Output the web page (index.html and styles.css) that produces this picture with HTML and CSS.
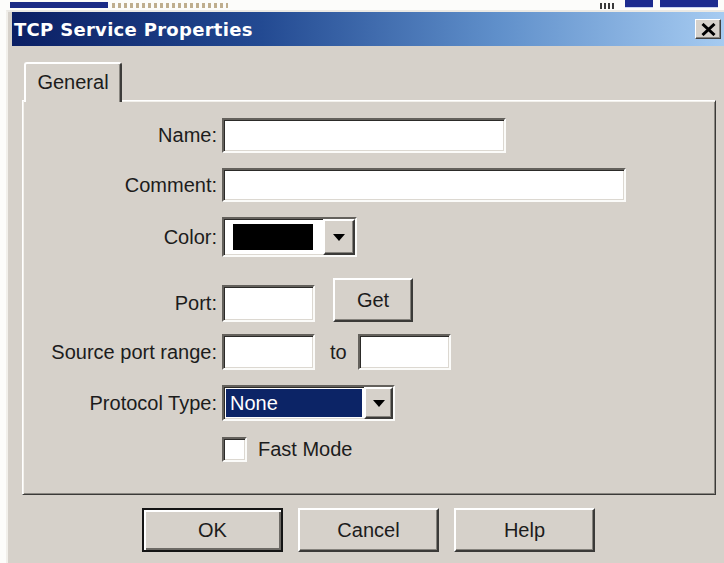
FILE: index.html
```html
<!DOCTYPE html>
<html lang="en">
<head>
<meta charset="utf-8">
<title>TCP Service Properties</title>
<link rel="stylesheet" href="styles.css">
</head>
<body>
  <div class="backdrop">
    <span class="frag-bar"></span>
    <span class="frag-dots"></span>
    <span class="frag-ink"></span>
    <span class="frag-tile"></span>
    <span class="frag-tile wide"></span>
  </div>

  <div class="window">
    <div class="titlebar">
      <span class="title">TCP Service Properties</span>
      <span class="close">
        <svg width="15" height="13" viewBox="0 0 15 13"><path d="M1.5 1 L13.5 12 M13.5 1 L1.5 12" stroke="#000" stroke-width="3"/></svg>
      </span>
    </div>

    <div class="client">
      <div class="tabstrip">
        <div class="tab">General</div>
      </div>

      <div class="panel">
        <div class="row">
          <label class="lbl">Name:</label>
          <div class="edit w-name"></div>
        </div>

        <div class="row">
          <label class="lbl">Comment:</label>
          <div class="edit w-comment"></div>
        </div>

        <div class="row">
          <label class="lbl">Color:</label>
          <div class="combo combo-color">
            <span class="swatch"></span>
            <span class="dd tall">
              <svg width="12" height="7" viewBox="0 0 12 7"><path d="M0 0H12L6 7Z" fill="#000"/></svg>
            </span>
          </div>
        </div>

        <div class="row row-port">
          <label class="lbl lbl-port">Port:</label>
          <div class="edit w-short h-port"></div>
          <button class="btn btn-get">Get</button>
        </div>

        <div class="row row-source">
          <label class="lbl">Source port range:</label>
          <div class="edit w-short h-source"></div>
          <span class="to">to</span>
          <div class="edit w-short h-source"></div>
        </div>

        <div class="row">
          <label class="lbl">Protocol Type:</label>
          <div class="combo combo-proto">
            <span class="selection">None</span>
            <span class="dd">
              <svg width="12" height="7" viewBox="0 0 12 7"><path d="M0 0H12L6 7Z" fill="#000"/></svg>
            </span>
          </div>
        </div>

        <div class="row row-check">
          <span class="lbl"></span>
          <span class="checkbox"></span>
          <span class="check-text">Fast Mode</span>
        </div>
      </div>

      <div class="actions">
        <button class="btn btn-main default">OK</button>
        <button class="btn btn-main">Cancel</button>
        <button class="btn btn-main">Help</button>
      </div>
    </div>
  </div>
</body>
</html>
```

FILE: styles.css
```css
* {
  box-sizing: border-box;
}

html,
body {
  margin: 0;
}

body {
  width: 724px;
  height: 563px;
  overflow: hidden;
  background: #fcfcfa;
  font-family: "Liberation Sans", Arial, sans-serif;
  font-size: 20px;
  color: #1c1c1c;
}

/* strip of the windows lying behind the dialog */
.backdrop {
  display: flex;
  align-items: flex-start;
  height: 10px;
}

.frag-bar {
  margin: 2px 0 0 10px;
  width: 98px;
  height: 6px;
  background: #1b2c86;
}

.frag-dots {
  margin: 3px 0 0 4px;
  width: 116px;
  height: 5px;
  background: repeating-linear-gradient(90deg, #bfae8e 0 3px, transparent 3px 6px);
}

.frag-ink {
  margin: 3px 0 0 auto;
  width: 16px;
  height: 6px;
  background: repeating-linear-gradient(90deg, #3a3a3a 0 2px, transparent 2px 4px);
}

.frag-tile {
  margin-left: 9px;
  width: 28px;
  height: 8px;
  background: #1c2b8f;
  border-bottom: 1px solid #c9d3f0;
}

.frag-tile.wide {
  margin: 0 6px 0 7px;
  width: 58px;
}

/* dialog frame */
.window {
  margin-left: 6px;
  height: 553px;
  padding-left: 4px;
  border-top: 2px solid #ebe9e4;
  border-left: 2px solid #f1efea;
  background: #d6d1ca;
}

.titlebar {
  display: flex;
  align-items: center;
  height: 34px;
  padding-left: 2px;
  background: linear-gradient(90deg, #0b1f64 0%, #234a92 35%, #5f8fca 68%, #a6cbf1 100%);
}

.title {
  color: #fff;
  font-family: "DejaVu Sans", Verdana, sans-serif;
  font-weight: bold;
  font-size: 18px;
  letter-spacing: 0.3px;
}

.close {
  display: flex;
  align-items: center;
  justify-content: center;
  margin: 0 3px 0 auto;
  width: 26px;
  height: 20px;
  background: #d6d1ca;
  border-top: 1px solid #fff;
  border-left: 1px solid #fff;
  border-right: 1px solid #404040;
  border-bottom: 1px solid #404040;
  box-shadow: inset -1px -1px #85827c;
}

.client {
  padding-top: 16px;
}

/* tab header */
.tabstrip {
  display: flex;
  padding-left: 12px;
}

.tab {
  position: relative;
  z-index: 1;
  display: flex;
  align-items: center;
  justify-content: center;
  width: 98px;
  height: 40px;
  margin-bottom: -2px;
  padding-bottom: 2px;
  background: #d6d1ca;
  border-top: 2px solid #fff;
  border-left: 2px solid #fff;
  border-right: 2px solid #3c3b39;
  border-radius: 3px 3px 0 0;
  box-shadow: inset -1px 0 #8a8781;
}

/* tab page */
.panel {
  display: flex;
  flex-direction: column;
  gap: 15px;
  margin-left: 10px;
  width: 694px;
  height: 395px;
  padding-top: 17px;
  border-top: 1px solid #fff;
  border-left: 1px solid #fff;
  border-right: 1px solid #3b3a38;
  border-bottom: 1px solid #3b3a38;
  box-shadow: inset 1px 1px #f3f1ec, inset -1px -1px #8a8781;
}

.row {
  display: flex;
  align-items: center;
}

.lbl {
  flex: none;
  width: 194px;
  margin-right: 5px;
  text-align: right;
}

/* sunken edit fields */
.edit,
.combo,
.checkbox {
  background: #fff;
  border-style: solid;
  border-width: 2px;
  border-color: #64615c #fbfbf9 #fbfbf9 #64615c;
  box-shadow: inset 1px 1px #2c2b29, inset -1px -1px #dcd8d1;
}

.w-name {
  width: 284px;
  height: 35px;
}

.w-comment {
  width: 404px;
  height: 34px;
}

.w-short {
  width: 93px;
}

.h-port {
  height: 37px;
}

.h-source {
  height: 36px;
}

.row-port {
  align-items: flex-end;
  margin-top: 6px;
}

.lbl-port {
  line-height: 37px;
}

.row-source {
  margin-top: -3px;
}

.to {
  margin: 0 11px 0 15px;
}

/* raised buttons */
.btn,
.dd {
  font: inherit;
  color: #1c1c1c;
  background: #d6d1ca;
  border-style: solid;
  border-width: 2px;
  border-color: #fff #3b3a38 #3b3a38 #fff;
  box-shadow: inset -1px -1px #85827c;
  padding: 0;
}

.btn-get {
  margin-left: 18px;
  width: 80px;
  height: 44px;
}

.dd {
  display: flex;
  align-items: center;
  justify-content: center;
  flex: none;
}

/* combo boxes */
.combo {
  display: flex;
  align-items: center;
  padding: 0;
}

.combo-color {
  width: 135px;
  height: 40px;
}

.swatch {
  width: 80px;
  height: 26px;
  margin-left: 9px;
  background: #000;
}

.combo-color .dd {
  margin-left: auto;
  width: 32px;
  height: 36px;
}

.combo-proto {
  width: 173px;
  height: 36px;
}

.selection {
  flex: 1;
  align-self: stretch;
  margin: 2px;
  padding-left: 4px;
  line-height: 28px;
  color: #fff;
  background: #0c2466;
}

.combo-proto .dd {
  width: 29px;
  height: 32px;
}

/* check box row */
.row-check {
  margin-top: 1px;
}

.checkbox {
  width: 25px;
  height: 25px;
  margin-right: 11px;
}

/* dialog buttons */
.actions {
  display: flex;
  gap: 15px;
  margin-top: 13px;
  padding-left: 130px;
}

.btn-main {
  width: 141px;
  height: 44px;
}

.btn.default {
  border-color: #151515;
  box-shadow: inset 2px 2px #fff, inset -2px -2px #6d6a65;
}
```
